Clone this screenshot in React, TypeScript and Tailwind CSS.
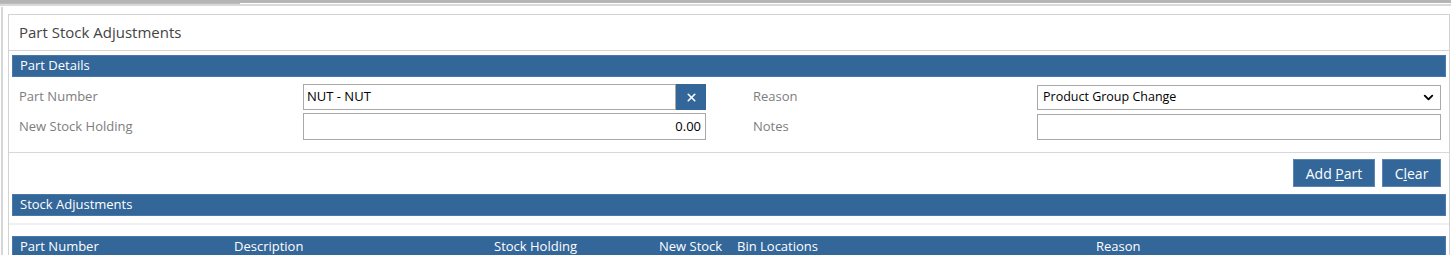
import React from 'react';
import { ChevronDown, X } from 'lucide-react';

const font = { fontFamily: '"Open Sans", "Noto Sans", sans-serif' };

const SectionBar: React.FC<{ title: string }> = ({ title }) => (
  <div className="mx-[3px] h-[22px] bg-[#336699] border border-[#4a78a8] flex items-center pl-[7px] text-[13px] text-white">
    {title}
  </div>
);

const App: React.FC = () => {
  const columns = [
    { label: 'Part Number', w: 'w-[214px]' },
    { label: 'Description', w: 'w-[260px]' },
    { label: 'Stock Holding', w: 'w-[165px]' },
    { label: 'New Stock', w: 'w-[78px]' },
    { label: 'Bin Locations', w: 'w-[359px]' },
    { label: 'Reason', w: 'flex-1' },
  ];

  return (
    <div className="w-[1451px] h-[255px] overflow-hidden bg-white" style={font}>
      {/* top strip */}
      <div className="h-[3px] bg-[#b5b5b5]" />
      <div className="flex h-[1px]">
        <div className="w-[240px] bg-[#bdbdbd]" />
        <div className="flex-1 bg-white" />
      </div>
      <div className="h-[2px] bg-[#d9d9d9]" />

      <div className="flex">
        <div className="w-[1px]" />
        <div className="w-[2px] mt-[1px] bg-[#d6d6d6] h-[260px]" />
        <div className="w-[5px]" />

        {/* Panel */}
        <div className="flex-1 mr-[1px] mt-[8px] border border-[#d3d3d3] border-b-0">
          <div className="h-[36px] flex items-center pl-[10px] text-[15px] text-[#444] border-b border-[#d3d3d3]">
            Part Stock Adjustments
          </div>

          <div className="pt-[4px]">
            <SectionBar title="Part Details" />
          </div>

          {/* form */}
          <div className="pl-[10px] pt-[7px] flex flex-col gap-[3px] text-[13px]">
            <div className="flex items-center h-[26px]">
              <div className="w-[284px] text-[#7d7d7d]">Part Number</div>
              <div className="w-[403px] h-[26px] flex">
                <div className="flex-1 border border-[#a9a9a9] flex items-center px-[3px] text-black">NUT - NUT</div>
                <div className="w-[30px] bg-[#336699] flex items-center justify-center text-white">
                  <X size={13} strokeWidth={3} />
                </div>
              </div>
              <div className="w-[47px]" />
              <div className="w-[284px] text-[#7d7d7d]">Reason</div>
              <div className="w-[404px] h-[25px] border border-[#a9a9a9] flex items-center justify-between pl-[5px] pr-[4px] text-black text-[12.5px]">
                <span>Product Group Change</span>
                <ChevronDown size={15} strokeWidth={3} className="text-black" />
              </div>
            </div>
            <div className="flex items-center h-[27px]">
              <div className="w-[284px] text-[#7d7d7d]">New Stock Holding</div>
              <div className="w-[403px] h-[27px] border border-[#a9a9a9] flex items-center justify-end px-[4px] text-black">
                0.00
              </div>
              <div className="w-[47px]" />
              <div className="w-[284px] text-[#7d7d7d]">Notes</div>
              <div className="w-[404px] h-[26px] border border-[#a9a9a9]" />
            </div>
          </div>

          <div className="mt-[12px] border-t border-[#d8d8d8]" />

          {/* buttons */}
          <div className="flex justify-end gap-[7px] pr-[8px] pt-[6px]">
            <button className="w-[82px] h-[28px] bg-[#336699] border border-[#5b86b3] text-white text-[14px]">
              Add <span className="underline">P</span>art
            </button>
            <button className="w-[59px] h-[28px] bg-[#336699] border border-[#5b86b3] text-white text-[14px]">
              C<span className="underline">l</span>ear
            </button>
          </div>

          <div className="pt-[7px]">
            <SectionBar title="Stock Adjustments" />
          </div>

          <div className="mt-[7px] h-[2px] bg-[#f0f0f0]" />

          <div className="mt-[11px] mx-[3px] h-[22px] bg-[#336699] border border-[#4a78a8] flex items-center pl-[7px] text-[13px] text-white">
            {columns.map((c) => (
              <div key={c.label} className={c.w}>
                {c.label}
              </div>
            ))}
          </div>
        </div>
      </div>
    </div>
  );
};

export default App;
